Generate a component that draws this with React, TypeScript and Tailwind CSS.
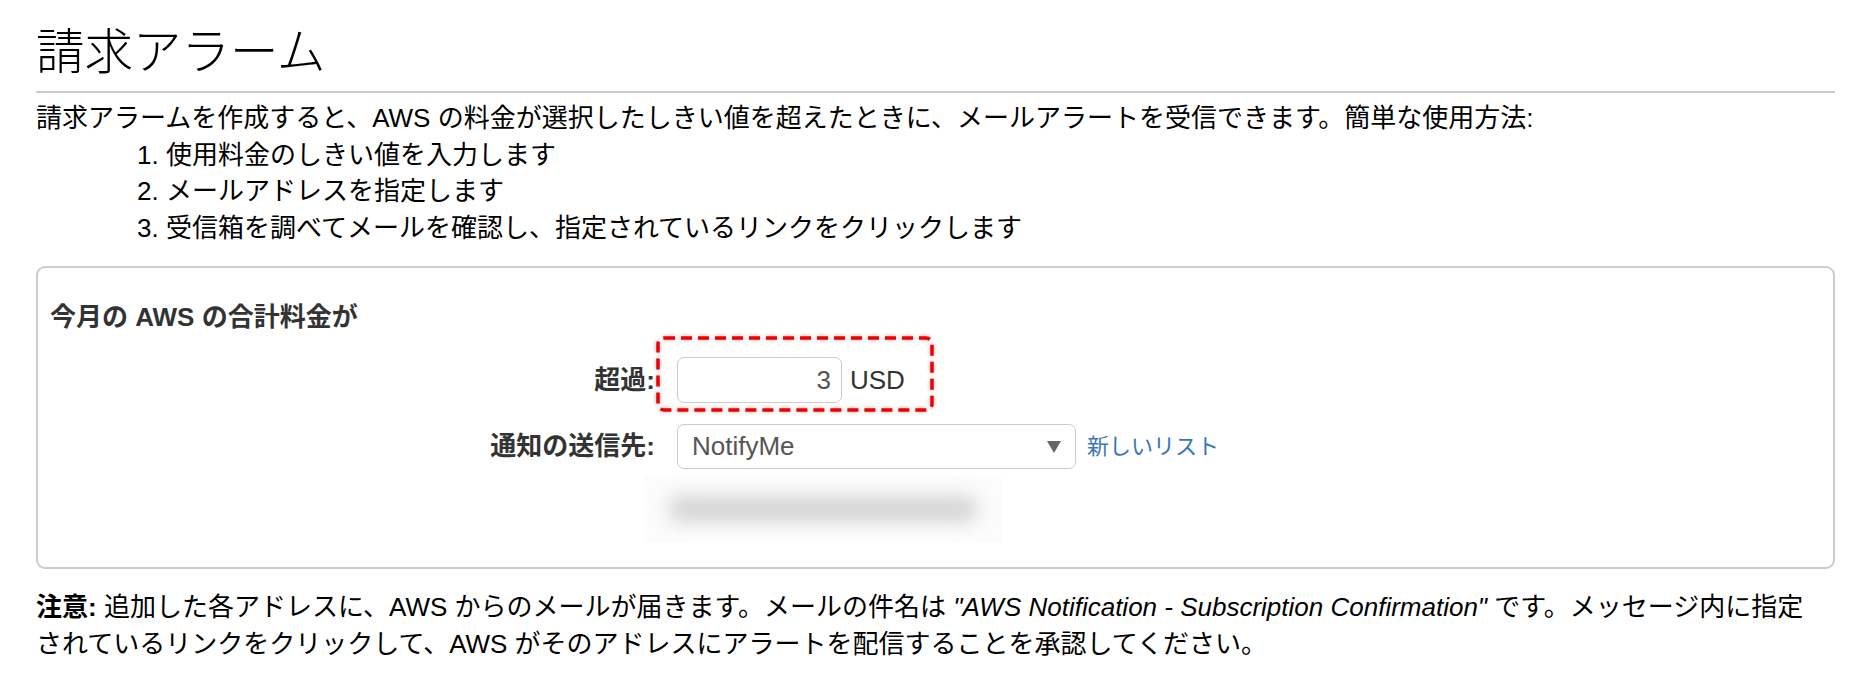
import React from 'react';

const steps = [
  '使用料金のしきい値を入力します',
  'メールアドレスを指定します',
  '受信箱を調べてメールを確認し、指定されているリンクをクリックします',
];

function HighlightFrame() {
  // red dashed marker drawn around the threshold input
  return (
    <svg
      className="pointer-events-none absolute left-[-21px] top-[-21px] drop-shadow-[0_0_2px_rgba(0,0,0,0.35)]"
      width="278"
      height="76"
      viewBox="0 0 278 76"
    >
      <rect x="2" y="2" width="274" height="72" rx="6" fill="none" stroke="#ee0000" strokeWidth="3.5" strokeDasharray="11 6" />
    </svg>
  );
}

export default function App() {
  return (
    <div className="min-h-screen bg-white px-[36px] pt-[24px] font-['Liberation_Sans','Noto_Sans_CJK_JP',sans-serif] text-black">
      {/* Page heading */}
      <h1 className="text-[48.5px] font-light leading-[56px]">請求アラーム</h1>
      <div className="mt-[11px] h-[2px] w-full bg-[#cccccc]" />

      {/* Intro and steps */}
      <p className="mt-[7px] text-[26px] leading-[36.5px]">
        請求アラームを作成すると、AWS の料金が選択したしきい値を超えたときに、メールアラートを受信できます。簡単な使用方法:
      </p>
      <ol className="pl-[101px] text-[26px] leading-[36.5px]">
        {steps.map((s, i) => (
          <li key={i}>
            {i + 1}. {s}
          </li>
        ))}
      </ol>

      {/* Alarm form */}
      <div className="mt-[20px] h-[303px] rounded-[9px] border-2 border-[#cccccc] pl-[12px] pt-[31px]">
        <h3 className="text-[26px] font-bold leading-[36px] text-[#333333]">今月の AWS の合計料金が</h3>

        <div className="mt-[22px] flex items-center">
          <label className="w-[627px] pr-[22px] text-right text-[26px] font-bold text-[#333333]">超過:</label>
          <div className="relative flex items-center">
            <HighlightFrame />
            <input
              readOnly
              value="3"
              className="h-[46px] w-[165px] rounded-[7px] border-[1.5px] border-[#cccccc] px-[10px] text-right text-[26px] text-[#555555] outline-none"
            />
            <span className="ml-[8px] text-[26px] text-[#333333]">USD</span>
          </div>
        </div>

        <div className="mt-[21px] flex items-center">
          <label className="w-[627px] pr-[22px] text-right text-[26px] font-bold text-[#333333]">通知の送信先:</label>
          <div className="flex h-[45px] w-[399px] items-center justify-between rounded-[7px] border-[1.5px] border-[#cccccc] pl-[14px] pr-[12px] text-[26px] text-[#555555]">
            <span>NotifyMe</span>
            <svg width="14" height="12" viewBox="0 0 14 12" className="mr-[2px]">
              <path d="M0 0 H14 L7 12 Z" fill="#666666" />
            </svg>
          </div>
          <a className="ml-[11px] text-[22px] text-[#3a75b8]">新しいリスト</a>
        </div>

        {/* masked address */}
        <div className="ml-[594px] mt-[7px] flex h-[66px] w-[358px] items-center justify-center bg-[#fcfcfc]">
          <div className="h-[26px] w-[310px] rounded-full bg-[#d4d4d4] blur-[9px]" />
        </div>
      </div>

      {/* Note */}
      <p className="mt-[20px] text-[26px] leading-[37px]">
        <span className="whitespace-nowrap">
          <b>注意:</b> 追加した各アドレスに、AWS からのメールが届きます。メールの件名は <i>"AWS Notification - Subscription Confirmation"</i> です。メッセージ内に指定
        </span>
        <br />
        されているリンクをクリックして、AWS がそのアドレスにアラートを配信することを承認してください。
      </p>
    </div>
  );
}
